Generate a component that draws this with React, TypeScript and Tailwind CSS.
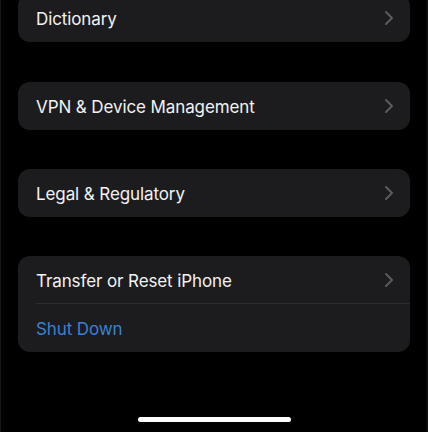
import { ChevronRight } from 'lucide-react'

const font = { fontFamily: 'Inter, "Liberation Sans", sans-serif' }

function Row({ label, chevron = true, blue = false, divider = false }: {
  label: string
  chevron?: boolean
  blue?: boolean
  divider?: boolean
}) {
  return (
    <div className="relative flex h-12 items-center pl-[18px] pr-[9px]">
      <span
        className={`flex-1 pt-[3px] text-[17px] tracking-[-0.1px] ${blue ? 'text-[#3b82d0]' : 'text-[#f2f2f4]'}`}
      >
        {label}
      </span>
      {chevron && <ChevronRight className="size-6 text-[#5b5b5f]" strokeWidth={2} />}
      {divider && <div className="absolute bottom-0 left-[18px] right-0 h-px bg-[#2c2c2e]" />}
    </div>
  )
}

export default function App() {
  return (
    <div
      className="relative flex h-[432px] w-[428px] flex-col overflow-hidden border-x border-[#161616] bg-black px-[17px]"
      style={font}
    >
      <div className="-mt-[6px] overflow-hidden rounded-xl bg-[#1c1c1e]">
        <Row label="Dictionary" />
      </div>
      <div className="mt-[40px] overflow-hidden rounded-xl bg-[#1c1c1e]">
        <Row label="VPN & Device Management" />
      </div>
      <div className="mt-[39px] overflow-hidden rounded-xl bg-[#1c1c1e]">
        <Row label="Legal & Regulatory" />
      </div>
      <div className="mt-[39px] overflow-hidden rounded-xl bg-[#1c1c1e]">
        <Row label="Transfer or Reset iPhone" divider />
        <Row label="Shut Down" chevron={false} blue />
      </div>
      <div className="mt-auto mb-[10px] flex justify-center">
        <div className="h-[5px] w-[153px] rounded-full bg-white" />
      </div>
    </div>
  )
}
